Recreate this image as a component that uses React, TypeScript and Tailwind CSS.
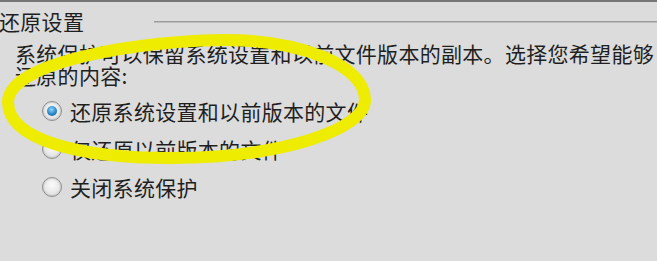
import React from "react";

function Radio({ checked, label }: { checked?: boolean; label: string }) {
  return (
    <div className="flex items-center h-[22px] gap-[8px]">
      <div className="w-[20px] h-[20px] rounded-full border border-[#8e8e8e] bg-[radial-gradient(circle_at_50%_40%,#fbfbfb,#e6e6e6_60%,#cfcfcf)] flex items-center justify-center shadow-[inset_0_0_2px_rgba(0,0,0,0.25)]">
        {checked && (
          <div className="w-[10px] h-[10px] rounded-full bg-[radial-gradient(circle_at_45%_35%,#8fd6ff,#2a86c8_55%,#0f4f86)]" />
        )}
      </div>
      <span className="whitespace-nowrap">{label}</span>
    </div>
  );
}

export default function App() {
  return (
    <div
      className="relative w-[657px] h-[261px] overflow-hidden bg-[#dcdcdc] text-[#1f1f1f] text-[21px] leading-[22px] tracking-[0.3px]"
      style={{ fontFamily: '"Noto Sans CJK SC", "Noto Sans", sans-serif' }}
    >
      <div className="h-[2px] bg-[#767676]" />
      <div className="flex flex-col">
        <div className="flex items-center mt-[8px]">
          <span className="ml-[-1px] whitespace-nowrap">还原设置</span>
          <div className="ml-[70px] flex-1 flex flex-col mt-[1px]">
            <div className="h-[1px] bg-[#9c9c9c]" />
            <div className="h-[1px] bg-[#bcbcbc]" />
          </div>
        </div>
        <div className="ml-[15px] mt-[10px] flex flex-col">
          <span className="whitespace-nowrap">系统保护可以保留系统设置和以前文件版本的副本。选择您希望能够</span>
          <span className="whitespace-nowrap">还原的内容:</span>
        </div>
        <div className="ml-[42px] mt-[14px] flex flex-col gap-[16px]">
          <Radio checked label="还原系统设置和以前版本的文件" />
          <Radio label="仅还原以前版本的文件" />
          <Radio label="关闭系统保护" />
        </div>
      </div>
      <svg
        className="absolute inset-0 pointer-events-none"
        width="657"
        height="261"
        viewBox="0 0 657 261"
      >
        <path
          d="M 8 102 C 8 60, 150 40, 225 40 C 300 40, 365 65, 365 100 C 365 130, 280 158, 170 158 C 80 158, 8 140, 8 102 Z"
          fill="none"
          stroke="#eeec00"
          strokeWidth="12"
          style={{ filter: "blur(0.6px)" }}
        />
      </svg>
    </div>
  );
}
